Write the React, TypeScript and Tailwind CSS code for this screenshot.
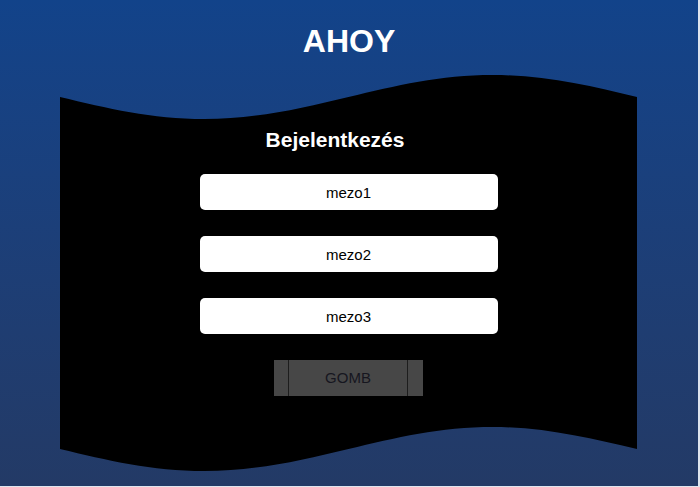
const fields = ["mezo1", "mezo2", "mezo3"];

export default function App() {
  return (
    <div className="h-[487px] w-[700px] bg-[#dfe5ee] font-['Liberation_Sans',Arial,sans-serif]">
      <div className="flex h-[486px] w-[698px] flex-col items-center bg-gradient-to-b from-[#12438a] to-[#233a66] pt-[23px]">
        <h1 className="text-[32px] leading-[36px] font-bold text-white">AHOY</h1>

        <div className="mt-[16px] mr-[1px] flex h-[396px] w-[577px] flex-col items-center bg-black pt-[50px] [clip-path:path('M0_22_C47_33.3_92_44_144.25_44_C196.5_44_241.5_33.3_288.5_22_C335.5_10.7_380.5_0_432.75_0_C485_0_530_10.7_577_22_L577_374_C530_363.3_485_352_432.75_352_C380.5_352_335.5_362.7_288.5_374_C241.5_385.3_196.5_396_144.25_396_C92_396_47_385.3_0_374_Z')]">
          <h2 className="pr-[27px] text-[21px] leading-[30px] font-bold text-white">Bejelentkezés</h2>

          <form className="mt-[19px] flex flex-col items-center gap-[26px]">
            {fields.map((f) => (
              <input
                key={f}
                placeholder={f}
                className="h-[36px] w-[298px] rounded-[5px] bg-white text-center text-[15px] text-black outline-none placeholder:text-black"
              />
            ))}
            <button
              type="button"
              className="flex h-[36px] w-[149px] bg-[#474747] pr-[15px] pl-[14px]"
            >
              <span className="flex h-full flex-1 items-center justify-center border-x border-[#1d1d1d] text-[15px] text-[#16161f]">
                GOMB
              </span>
            </button>
          </form>
        </div>
      </div>
    </div>
  );
}
